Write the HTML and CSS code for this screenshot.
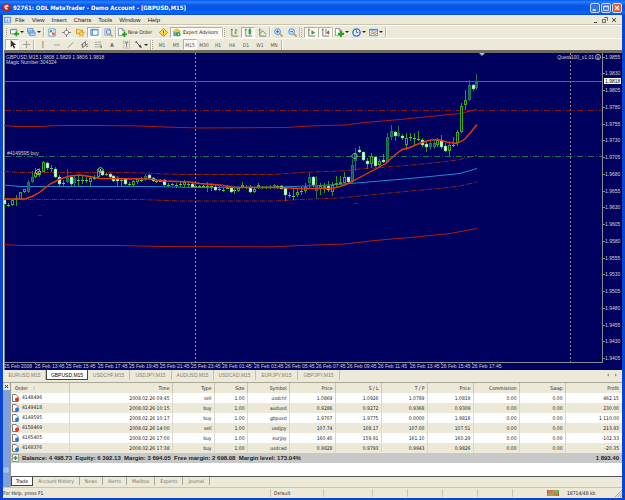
FILE: index.html
```
<!DOCTYPE html>
<html lang="en">
<head>
<meta charset="utf-8">
<title>92761: ODL MetaTrader - Demo Account - [GBPUSD,M15]</title>
<link rel="stylesheet" href="styles.css">
</head>
<body>
<svg class="defs" aria-hidden="true">
  <symbol id="plus" viewBox="0 0 6 6"><path d="M2 0h2v2h2v2H4v2H2V4H0V2h2z" fill="#18a818"/></symbol>
  <symbol id="sheet" viewBox="0 0 9 9"><path d="M.5.5h4l3 2.500v5.500h-7z" fill="#fff" stroke="#8a8f98"/><path d="M4.500.5v2.500h3" fill="none" stroke="#8a8f98"/></symbol>
</svg>
<div class="window">
  <header class="title">
    <svg class="logo" viewBox="0 0 9 9"><circle cx="4.500" cy="4.500" r="4.200" fill="#b82418"/><path d="M2 3l3-1.500 2 1.500-1 1-2 .5 2 1-1 1.500-2-1" fill="#fff" opacity=".8"/></svg>
    <h1>92761: ODL MetaTrader - Demo Account - [GBPUSD,M15]</h1>
    <button class="win" aria-label="Minimize"><svg viewBox="0 0 10 10"><path d="M2 7.500h4" stroke="#fff" stroke-width="2"/></svg></button>
    <button class="win" aria-label="Restore"><svg viewBox="0 0 10 10"><path d="M2 2.500h6v5.500H2zM2 3.500h6" fill="none" stroke="#fff"/></svg></button>
    <button class="win close" aria-label="Close"><svg viewBox="0 0 10 10"><path d="M2.500 2.500l5 5m0-5l-5 5" stroke="#fff" stroke-width="1.500"/></svg></button>
  </header>

  <nav class="menu">
    <svg class="menu-icon" viewBox="0 0 9 9"><path d="M.5 1.500h7v6h-7z" fill="#fff" stroke="#4a8be0"/><path d="M0 2h8M2 4v3M4 3.500v3M6 4v2" stroke="#4a8be0"/></svg>
    <button>File</button><button>View</button><button>Insert</button><button>Charts</button><button>Tools</button><button>Window</button><button>Help</button>
    <span class="grow"></span>
    <button class="mdi" aria-label="Minimize chart"><svg viewBox="0 0 8 8"><path d="M2 6.500h3" stroke="#444"/></svg></button>
    <button class="mdi" aria-label="Restore chart"><svg viewBox="0 0 8 8"><path d="M3.500 2V1.500h3v3H6M1.500 3.500h3v3h-3z" fill="none" stroke="#666"/></svg></button>
    <button class="mdi" aria-label="Close chart"><svg viewBox="0 0 8 8"><path d="M2 2l4 4m0-4L2 6" stroke="#444"/></svg></button>
  </nav>

  <div class="toolbar">
    <i class="grip"></i>
    <button class="drop" aria-label="New chart"><svg viewBox="0 0 10 10"><path d="M.5 1.500h7v5h-7z" fill="#fff" stroke="#6c8a78"/><path d="M1 2h6" stroke="#5b9be0"/><use href="#plus" x="4" y="3.500" width="6" height="6"/></svg></button>
    <button class="drop" aria-label="Profiles"><svg viewBox="0 0 10 10"><path d="M.5.5h6v4h-6zM1.500 2.500h6v4h-6zM3 4.500h6v4H3z" fill="#e4f0fc" stroke="#5c94d8"/></svg></button>
    <i class="sep"></i>
    <button aria-label="Market Watch"><svg viewBox="0 0 10 10"><path d="M1 1h7v8H1z" fill="#fff" stroke="#5b9be0"/><path d="M2 2.500h2.500V5H2z" fill="#30a848"/><path d="M4.500 5h3v3h-3z" fill="#e06048"/><path d="M5 2h2v2H5z" fill="#9cc8f0"/></svg></button>
    <button aria-label="Data Window"><svg viewBox="0 0 10 10"><circle cx="5" cy="5" r="2.500" fill="#fff" stroke="#88888c"/><path d="M5 0v3M5 7v3M0 5h3M7 5h3" stroke="#777"/></svg></button>
    <button aria-label="Navigator"><svg viewBox="0 0 10 10"><path d="M.5 1.500h3l1 1h3v4h-7z" fill="#f8dc70" stroke="#c89830"/><path d="M6 3l1 2 2.500.3-2 1.600.5 2.600-2-1.400-2 1.400.5-2.600-2-1.600L5 5z" fill="#ffd840" stroke="#b88820" stroke-width=".5"/></svg></button>
    <button class="on" aria-label="Terminal"><svg viewBox="0 0 10 10"><path d="M1 1.500h8v6.500H1z" fill="#fff" stroke="#3a78cc"/><path d="M1 2h8M2.500 2v6" stroke="#5c98e0" stroke-width="1.500"/></svg></button>
    <button aria-label="Strategy Tester"><svg viewBox="0 0 10 10"><path d="M1 1h6v7H1z" fill="#e8f0fc" stroke="#86a0c4"/><circle cx="5" cy="4.500" r="2.500" fill="#cce4fc" stroke="#5a80b4"/><path d="M7 6.500l2.500 3" stroke="#c89830" stroke-width="1.500"/></svg></button>
    <i class="sep"></i>
    <button class="text order"><svg viewBox="0 0 10 10"><use href="#sheet" width="9" height="9"/><use href="#plus" x="4" y="4" width="6" height="6"/></svg>New Order</button>
    <button aria-label="MetaEditor"><svg viewBox="0 0 10 10"><path d="M5 .5L9.500 5 5 9.500.5 5z" fill="#ffdc48" stroke="#b88810"/><path d="M5 3v3M5 7v1" stroke="#8a6000"/></svg></button>
    <button class="text on experts"><svg viewBox="0 0 10 10"><path d="M1 4l4-3 4 2-1 3H2z" fill="#f4c838" stroke="#b88810" stroke-width=".5"/><path d="M1.500 5h5v4h-5z" fill="#58a0e0"/><circle cx="7" cy="7" r="2.500" fill="#20a038"/><path d="M6.500 5.500l2 1.500-2 1.500z" fill="#fff"/></svg>Expert Advisors</button>
    <i class="sep"></i><i class="grip"></i>
    <button aria-label="Bar Chart"><svg viewBox="0 0 10 10"><path d="M2 1v8h7M1 2.500L2 1l1 1.500" fill="none" stroke="#777"/><path d="M6.500 1v6M5 5.500h1.500M6.500 2.500H8" stroke="#30a030"/></svg></button>
    <button class="on" aria-label="Candlesticks"><svg viewBox="0 0 10 10"><path d="M2 1v8h7M1 2.500L2 1l1 1.500" fill="none" stroke="#777"/><path d="M6.500 0v8" stroke="#188018"/><path d="M5 1.500h3v5H5z" fill="#28b040"/></svg></button>
    <button aria-label="Line Chart"><svg viewBox="0 0 10 10"><path d="M2 1v8h7M1 2.500L2 1l1 1.500" fill="none" stroke="#777"/><path d="M3 6c1-4 3-3 6 1" fill="none" stroke="#40a040"/></svg></button>
    <i class="sep"></i>
    <button aria-label="Zoom In"><svg viewBox="0 0 10 10"><circle cx="4" cy="4" r="3.200" fill="#c8e4ff" stroke="#4088dc"/><path d="M2.500 4h3M4 2.500v3" stroke="#2060c0"/><path d="M6.500 6.500l3 3" stroke="#d0a028" stroke-width="2"/></svg></button>
    <button aria-label="Zoom Out"><svg viewBox="0 0 10 10"><circle cx="4" cy="4" r="3.200" fill="#c8e4ff" stroke="#4088dc"/><path d="M2.500 4h3" stroke="#2060c0"/><path d="M6.500 6.500l3 3" stroke="#d0a028" stroke-width="2"/></svg></button>
    <i class="sep"></i><i class="grip"></i>
    <button class="on" aria-label="Auto Scroll"><svg viewBox="0 0 10 10"><path d="M2 1v8h7M1 2.500L2 1l1 1.500" fill="none" stroke="#777"/><path d="M5 2.500l4 2.500-4 2.500z" fill="#28a838"/></svg></button>
    <button class="on" aria-label="Chart Shift"><svg viewBox="0 0 10 10"><path d="M2 1v8h7M1 2.500L2 1l1 1.500M5.500 1v6" fill="none" stroke="#777"/><path d="M9 2.500L6 5l3 2.500z" fill="#3068c8"/><path d="M7.500 4l2 1-2 1z" fill="#d84820"/></svg></button>
    <i class="sep"></i>
    <button class="drop" aria-label="Indicators"><svg viewBox="0 0 10 10"><use href="#sheet" width="9" height="9"/><use href="#plus" x="3" y="3" width="7" height="7"/></svg></button>
    <button class="drop" aria-label="Periods"><svg viewBox="0 0 10 10"><circle cx="5" cy="5" r="4" fill="#e4f2ff" stroke="#2c6cd0" stroke-width="1.500"/><path d="M5 2.500V5h2" fill="none" stroke="#555"/></svg></button>
    <button class="drop" aria-label="Templates"><svg viewBox="0 0 10 10"><path d="M.5 1.500h9v7h-9z" fill="#f4f8ff" stroke="#5c94d8"/><path d="M0 2h10" stroke="#4c84cc" stroke-width="1.500"/><path d="M1.500 5l2-1 2 1 3-1" fill="none" stroke="#c87040"/><path d="M1.500 7l3-1 2 1 2-1" fill="none" stroke="#40a050"/></svg></button>
    <i class="sep"></i>
  </div>

  <div class="toolbar drawing">
    <button class="on" aria-label="Cursor"><svg viewBox="0 0 10 10"><path d="M3 0v8l2-2 1.500 3.500L8 9 6.500 5.500H9z" fill="#333"/></svg></button>
    <button aria-label="Crosshair"><svg viewBox="0 0 10 10"><path d="M5 1v8M1 5h8" stroke="#999"/></svg></button>
    <i class="sep"></i>
    <button aria-label="Vertical Line"><svg viewBox="0 0 10 10"><path d="M5.500 1v8" stroke="#a07850"/></svg></button>
    <button aria-label="Horizontal Line"><svg viewBox="0 0 10 10"><path d="M2 5.500h7" stroke="#999"/></svg></button>
    <button aria-label="Trendline"><svg viewBox="0 0 10 10"><path d="M2 8.500l6-6" stroke="#888"/></svg></button>
    <button aria-label="Channel"><svg viewBox="0 0 10 10"><path d="M1 6l6-5M2 9l7-5M3 4v4M6 2v4M7 7h2" stroke="#666"/></svg></button>
    <button aria-label="Fibonacci"><svg viewBox="0 0 10 10"><path d="M1 2.500h7M1 5h7M1 7.500h7" stroke="#888" stroke-dasharray="1 .5"/><path d="M8 6v3" stroke="#555"/></svg></button>
    <button class="glyph">A</button>
    <button aria-label="Text Label"><svg viewBox="0 0 10 10"><path d="M1.500 1.500h7v7.500h-7z" fill="none" stroke="#999" stroke-dasharray="1 1"/><path d="M3 3h4M5 3v5" stroke="#777"/></svg></button>
    <button class="drop" aria-label="Arrows"><svg viewBox="0 0 10 10"><path d="M1 3l2-2 1 2zM5 6l2-1 2 4-3-1z" fill="#444"/><path d="M2 2l5 5" stroke="#555"/></svg></button>
    <i class="sep"></i><i class="grip"></i>
    <button>M1</button><button>M5</button><button class="on">M15</button><button>M30</button><button>H1</button><button>H4</button><button>D1</button><button>W1</button><button>MN</button>
    <i class="sep"></i>
  </div>

  <main>
    <svg class="chart" id="chart" viewBox="3 50 619 320" role="img" aria-label="GBPUSD M15 candlestick chart">
      <rect x="3" y="50" width="619" height="3" fill="#6c6a62"/>
      <rect x="3" y="50" width="1" height="320" fill="#ece9d8"/>
      <rect x="4" y="53" width="618" height="317" fill="#00005e"/>
      <path d="M4.500 52v318" stroke="#85858a"/>
      <g fill="none">
        <path class="grid" d="M195.500 53V362M570.500 53V362"/>
        <path class="stop" d="M5 110.500H602"/>
        <path class="entry" d="M5 156.500H602"/>
        <path d="M5 81.500H602" stroke="#606078"/>
        <path d="M602.500 53V362.500M5 362.500H603" stroke="#8c8c98"/>
        <path class="band" d="M4 125.500L15 126.500 40 126.500 60 125.500 100 125.500 140 126 165 127 200 128 285 127.500 310 126 345 125 365 122.500 400 119.500 430 116.500 460 113.500 477 109.500"/>
        <path class="band" d="M4 244.500L20 245.500 120 245.500 160 246.500 275 246.800 300 245.500 345 244 375 240.500 410 237.500 450 233.500 477 228.500"/>
        <path class="inner" d="M4 171.500L20 172.500 130 172.500 180 174.500 275 174.500 300 172.500 340 171 360 169 400 166 433 163 457 160 477 155.500"/>
        <path class="inner" d="M4 199.500H140L180 201 275 201 300 199.500 340 198 370 195 410 191 440 188.500 460 186 477 182"/>
        <path class="slow" d="M4 185L20 186.500 150 186.500 200 187.500 280 187 320 185.500 350 183.500 380 181 410 178.500 440 175.500 460 173.500 477 168.500"/>
      </g>
      <path d="M38 215.500h4M354 203.500h4" stroke="#8a1010"/>
      <g id="candles"></g>
      <path class="fast" d="M4 199L25 199 33 196 40 192 50 184 60 179 70 176 80 175 90 176.500 100 178.500 150 179 165 181 190 182 200 183.500 220 185 235 187.500 280 187.500 300 188.500 333 188.500 345 185 355 180 370 172 385 164 395 155 402 149.500 410 147.500 418 144 428 140.500 437 139.500 447 142 457 143.500 465 139 471 132 477 124.500"/>
      <g fill="none" stroke="#8cc88c"><path d="M38 169l3 3-3 3-3-3zM38 171v3M100.500 167l3 3-3 3-3-3zM100.500 169v3M354.500 153l3 3-3 3-3-3z"/></g>
      <path d="M479 53h6l-3 3z" fill="#b8b8b8"/>
      <rect x="604" y="78" width="17" height="6" fill="#fff"/>
      <text x="605" y="83" class="bid">1.9818</text>
      <g class="label">
        <text x="6" y="59">GBPUSD,M15</text><text x="39" y="59">1.9808 1.9829 1.9806 1.9818</text>
        <text x="6" y="64">Magic Number:304324</text>
        <text x="7" y="155">#4149595 buy</text>
        <text x="594" y="59" text-anchor="end">Quest100_v1.01</text>
      </g>
      <g fill="none" stroke="#c8c8b8" stroke-width=".8"><circle cx="598" cy="57" r="2.600"/><path d="M596.800 57.800q1.200 1 2.400 0M597 56.200h.6M598.500 56.200h.6"/></g>
      <g class="label" id="axes"></g>
    </svg>
  </main>

  <div class="charts">
    <button>EURUSD,M15</button><button class="current">GBPUSD,M15</button><button>USDCHF,M15</button><button>USDJPY,M15</button><button>AUDUSD,M15</button><button>USDCAD,M15</button><button>EURJPY,M15</button><button>GBPJPY,M15</button>
    <span class="grow"></span>
    <button class="scroll" aria-label="Scroll left"><svg viewBox="0 0 4 4"><path d="M3 .5v3L1 2z" fill="#888"/></svg></button>
    <button class="scroll" aria-label="Scroll right"><svg viewBox="0 0 4 4"><path d="M1 .5v3L3 2z" fill="#888"/></svg></button>
  </div>

  <section class="terminal">
    <div class="side"><button aria-label="Close terminal"><svg viewBox="0 0 5 5"><path d="M1 1l3 3m0-3L1 4" stroke="#333"/></svg></button>
      <svg class="side-icon" viewBox="0 0 6 6"><path d="M1 1h4v4H1zM1 3h4" fill="none" stroke="#d8e8fc" stroke-width=".7"/></svg></div>
    <div class="panel">
      <table>
        <colgroup><col class="c-order"><col class="c-time"><col class="c-type"><col class="c-size"><col class="c-symbol"><col class="c-num"><col class="c-num"><col class="c-num"><col class="c-num"><col class="c-num"><col class="c-num"><col></colgroup>
        <thead><tr><th>Order <span class="sort">/</span></th><th>Time</th><th>Type</th><th>Size</th><th>Symbol</th><th>Price</th><th>S / L</th><th>T / P</th><th>Price</th><th>Commission</th><th>Swap</th><th>Profit</th></tr></thead>
        <tbody id="orders"></tbody>
        <tfoot><tr><td colspan="11"><svg class="row-icon" viewBox="0 0 7 8"><path d="M.5.5h6v7h-6z" fill="#f4f8f0" stroke="#9a9a9a"/><path d="M3.500 2v4M1.500 4h4" stroke="#28a028" stroke-width="1.500"/></svg>Balance: 4 498.73&nbsp; Equity: 6 392.13&nbsp; Margin: 3 694.05&nbsp; Free margin: 2 698.08&nbsp; Margin level: 173.04%</td><td>1 893.40</td></tr></tfoot>
      </table>
      <div class="tabs"><button class="current">Trade</button><button>Account History</button><button>News</button><button>Alerts</button><button>Mailbox</button><button>Experts</button><button>Journal</button></div>
    </div>
  </section>

  <footer class="status">
    <span class="help">For Help, press F1</span><span class="profile">Default</span><span class="cell wide"></span><span class="cell"></span><span class="cell"></span><span class="cell"></span><span class="cell"></span><span class="cell last"></span>
    <span class="link"><svg viewBox="0 0 12 6"><path d="M0 0h12v6H0z" fill="#58a838"/><path d="M0 0h6v3H0zM7 3h5v3H7z" fill="#d84830"/><path d="M2 0v6M4 0v6M6 0v6M8 0v6M10 0v6" stroke="#f0d8b0" stroke-width=".5"/></svg>18714/48 kb</span>
    <svg class="resize" viewBox="0 0 8 8"><path d="M1 8l7-7M3.500 8L8 3.500M6 8l2-2" stroke="#aaa798"/></svg>
  </footer>
</div>
<script src="app.js"></script>
</body>
</html>
```
FILE: styles.css
```
* { box-sizing: border-box; }
body {
  margin: 0;
  background: #0a44d0;
  font: 5px/6px "DejaVu Sans Condensed", "DejaVu Sans", sans-serif;
  color: #1c1c1c;
}
button {
  font: inherit;
  color: inherit;
  border: 0;
  padding: 0;
  margin: 0;
  background: none;
  white-space: nowrap;
}
svg { display: block; }
.defs { width: 0; height: 0; position: absolute; }
.grow { flex: 1; }
.window { min-height: 100vh; padding: 0 3px 2px; display: flex; flex-direction: column; }

.title {
  display: flex;
  align-items: center;
  height: 15px;
  margin: 0 -3px;
  padding: 0 3px 0 2px;
  gap: 1px;
  background: linear-gradient(#0a5cf0, #2a80ff 2px, #0c58e8 5px, #0654e4 9px, #0868ff 13px, #0848c8);
}
.logo { width: 9px; height: 9px; }
.title h1 {
  flex: 1;
  margin: 0 0 0 1px;
  font: bold 6px/8px "DejaVu Sans Condensed", sans-serif;
  color: #fff;
}
.win { width: 10px; height: 10px; border: 1px solid #c8dcff; border-radius: 2px; background: #3870e8; }
.win svg { width: 8px; height: 8px; }
.close { background: #e45a30; }

.menu {
  display: flex;
  align-items: center;
  height: 10px;
  padding: 0 3px 0 1px;
  font: 6px/8px "Liberation Sans", sans-serif;
  background: #ece9d8;
  border-bottom: 1px solid #c8c5b4;
}
.menu-icon { width: 8px; height: 8px; }
.menu button { padding: 0 4px 0 3px; }
.menu button.mdi { width: 9px; padding: 0; }
.mdi svg { width: 8px; height: 8px; }

.toolbar { display: flex; align-items: center; height: 13px; padding-left: 3px; background: #ece9d8; border-top: 1px solid #fcfbf4; }
.toolbar button { flex: none; width: 14px; height: 11px; display: flex; align-items: center; justify-content: center; border: 1px solid transparent; }
.toolbar button svg { flex: none; width: 9px; height: 9px; }
.toolbar button.on { background: #f8f7f0; border-color: #b4b1a0 #fff #fff #b4b1a0; }
.toolbar .drop { width: 17px; justify-content: flex-start; gap: 1px; }
.toolbar .drop::after { content: ""; border: 2px solid transparent; border-top-color: #222; border-bottom: 0; }
.toolbar .text { justify-content: flex-start; gap: 1px; }
.toolbar .order { width: 39px; }
.toolbar .experts { width: 52px; padding-left: 1px; gap: 2px; }
.grip { flex: none; width: 3px; height: 9px; border-left: 1px dotted #a09d8c; }
.sep { flex: none; width: 2px; height: 10px; border-left: 1px solid #bab7a6; border-right: 1px solid #fff; }
.drawing { height: 12px; padding-left: 2px; color: #555; }
.drawing .glyph { font-weight: bold; color: #555; }

.chart { width: 100%; height: auto; }
.chart path { stroke-width: 1; }
.grid { stroke: #8a8c90; stroke-dasharray: 2 2; }
.stop { stroke: #8c1418; stroke-dasharray: 6 2 1 2; }
.entry { stroke: #1c7458; stroke-dasharray: 6 2 1 2; }
.band { stroke: #ac1c14; }
.inner { stroke: #84241c; stroke-dasharray: 5 1 1 1; }
.slow { stroke: #2488d0; }
.chart .fast { stroke: #e83c08; stroke-width: 1.400; fill: none; }
.label { font: 5px "Liberation Sans", sans-serif; fill: #d4d4cc; }
.bid { font: 5px "Liberation Sans", sans-serif; fill: #000; }

.charts { display: flex; height: 13px; padding: 0 2px 1px 1px; background: #ece9d8; color: #85836f; font: 5px/10px "Liberation Sans", sans-serif; border-bottom: 1px solid #aaa798; }
.charts button { width: 42px; height: 10px; border-right: 1px solid #c4c1b0; }
.charts .current { background: #fff; color: #000; border: 1px solid #444; border-top: 0; }
.charts .scroll { width: 8px; display: grid; place-items: center; border: 0; }
.scroll svg { width: 4px; height: 4px; }

.terminal { display: flex; flex: 1; background: #ece9d8; }
.side { width: 7px; display: flex; flex-direction: column; justify-content: space-between; background: linear-gradient(#ece9d8 7px, #7ca0e0 7px); }
.side button svg { width: 5px; height: 5px; margin: 1px; }
.side-icon { width: 6px; height: 6px; margin-bottom: 14px; }
.panel { flex: 1; display: flex; flex-direction: column; background: #fff; border-left: 1px solid #999; }
table { width: 100%; table-layout: fixed; border-collapse: collapse; }
.c-order { width: 58px; }
.c-time { width: 103px; }
.c-type { width: 42px; }
.c-size { width: 33px; }
.c-symbol { width: 42px; }
.c-num { width: 46px; }
th, td { height: 10px; padding: 0 2px; text-align: right; font-weight: normal; white-space: nowrap; border-right: 1px solid #dcd9cc; }
th { background: #ece9d8; border-color: #c8c5b4; }
th:first-child, td:first-child { text-align: left; }
th:first-child { padding-left: 4px; }
th:last-child, td:last-child { border-right: 0; padding-right: 3px; }
.sort { margin-left: 4px; color: #999; }
tbody tr:nth-child(even) { background: #ece9d8; }
td:first-child { padding-left: 1px; }
.row-icon { display: inline-block; width: 7px; height: 8px; margin-right: 3px; vertical-align: middle; }
tfoot td { background: #c8c8c8; border: 0; font: bold 6px/8px "Liberation Sans", sans-serif; }

.tabs { display: flex; height: 11px; margin-top: auto; background: #ece9d8; border-top: 1px solid #555; color: #77756a; }
.tabs button { height: 8px; padding: 0 5px; border-right: 1px solid #aaa798; }
.tabs .current { height: 9px; padding: 0 4px; background: #fff; color: #000; border: 1px solid #444; border-top: 0; }

.status { display: flex; align-items: center; height: 11px; background: #ece9d8; border-top: 1px solid #c8c5b4; }
.status > span { height: 8px; line-height: 8px; border-right: 1px solid #c8c5b4; }
.status .help { width: 268px; }
.status .profile { width: 53px; padding-left: 3px; }
.status .cell { width: 35px; }
.status .wide { width: 49px; }
.status .last { flex: 1; max-width: 34px; border: 0; }
.status .link { flex: 1; display: flex; align-items: center; gap: 8px; border: 0; }
.link svg { width: 12px; height: 6px; }
.resize { width: 8px; height: 8px; }
```
FILE: app.js
```
const NS = "http://www.w3.org/2000/svg";
const add = (parent, tag, attrs, text) => {
  const el = document.createElementNS(NS, tag);
  for (const key in attrs) el.setAttribute(key, attrs[key]);
  if (text) el.textContent = text;
  parent.append(el);
};

// kind (u rising, d falling, t strong rising, n doji), high, low, body top, body bottom
const candles = `d 285 320 300 313;n 308 320 316;u 297 318 299 314;u 285 318 295 300;u 275 297 277 297;u 266 280 268 277;t 240 280 247 275;t 212 250 230 247;u 205 235 218 232;u 205 230 214 224;u 184 217 187 215;d 186 210 188 204;n 196 215 203;d 202 235 207 230;d 225 260 230 252;n 240 262 248;t 208 250 235 246;d 228 258 231 252;t 228 258 235 250;n 228 258 241;n 228 252 240;n 232 250 239;u 230 258 235 246;n 225 240 233;u 205 235 212 232;d 210 228 214 224;n 218 228 223;d 220 235 223 231;d 226 246 229 242;d 228 258 234 244;n 236 258 241;d 234 256 237 253;n 246 262 252;u 240 258 242 256;u 236 252 238 246;n 232 246 239;t 222 244 228 238;d 222 238 226 234;d 230 246 233 243;n 238 250 243;n 236 246 242;d 236 258 240 255;n 250 262 254;n 248 258 253;n 248 264 254;n 246 262 251;u 240 260 246 256;n 246 260 252;d 248 262 251 260;n 252 262 257;n 254 260 257;n 254 260 257;n 245 276 257;n 250 272 257;d 256 272 262 270;n 258 272 266;n 262 276 269;n 255 268 263;d 262 280 264 277;n 262 282 270;u 262 276 264 273;u 246 265 255 262;n 254 266 261;d 256 280 262 277;u 260 280 266 276;u 250 266 256 262;n 258 266 262;n 258 266 262;n 256 266 260;t 252 266 256 262;n 254 266 259;d 255 268 259 266;d 262 302 264 286;n 275 295 285;n 265 300 287;u 268 290 276 284;n 260 285 273;u 250 280 262 272;t 220 268 230 248;d 228 262 230 256;t 228 298 258 274;u 250 285 258 266;u 250 280 258 262;d 244 275 257 270;u 245 288 256 276;u 228 262 250 256;u 228 255 245 252;u 215 250 232 250;d 230 252 232 246;t 178 250 195 246;t 145 212 160 182;d 138 158 151 157;d 155 182 157 180;d 175 208 183 191;u 158 205 168 192;d 168 200 171 198;u 176 200 182 196;d 163 190 180 186;t 100 190 110 185;t 75 120 93 110;d 93 122 96 107;t 78 110 98 108;d 103 120 108 115;u 100 150 115 135;n 98 122 112;n 100 135 113;n 94 122 117;d 114 140 120 135;d 122 155 132 141;t 120 150 130 142;t 118 146 128 140;u 114 142 120 134;d 106 146 120 142;d 128 156 138 153;u 130 168 134 154;n 112 142 134;u 90 138 95 130;u 8 98 18 96;u -30 30 0 16;t -60 2 -44 0;d -48 -28 -45 -33;t -78 -30 -55 -35`;

const group = document.getElementById("candles");
candles.split(";").forEach((row, i) => {
  const [kind, ...v] = row.split(" ");
  const [high, low, top, bottom] = v.map(n => Math.round(100 + n / 3));
  const x = Math.round(4.2 + i * 3.903);
  const wick = kind === "t" ? "#1c7850" : "#2c9c1c";
  add(group, "path", { d: `M${x + 0.5} ${high}V${low}`, stroke: wick });
  if (kind === "n") {
    add(group, "path", { d: `M${x - 1} ${top + 0.5}h3`, stroke: "#5cc840" });
  } else if (kind === "d") {
    add(group, "rect", { x: x - 1, y: top, width: 3, height: Math.max(2, bottom - top), fill: "#c8ffd8", stroke: "#38b040", "stroke-width": 0.4 });
  } else {
    add(group, "rect", { x: x - 0.5, y: top + 0.5, width: 2, height: Math.max(1, bottom - top - 1), fill: kind === "t" ? "#145c58" : "#00005e", stroke: kind === "t" ? "#1c7c58" : "#3cac18" });
  }
});

const axes = document.getElementById("axes");
for (let i = 0; i < 19; i++) {
  const y = 56.5 + i * 16.75;
  add(axes, "path", { d: `M603 ${Math.round(y) + 0.5}h2`, stroke: "#8c8c98" });
  if (i !== 1 || y < 78) add(axes, "text", { x: 605, y: Math.round(y + 2) }, ((19855 - i * 25) / 10000).toFixed(4));
}
for (let i = 0; i < 16; i++) {
  const hour = 11 + i * 2;
  const label = i === 0 ? "25 Feb 2008" : `${hour < 24 ? 25 : 26} Feb ${String(hour % 24).padStart(2, "0")}:45`;
  const x = 4 + Math.round(i * 31.2);
  add(axes, "path", { d: `M${x + 0.5} 362v2`, stroke: "#8c8c98" });
  add(axes, "text", { x, y: 368 }, label);
}

const orders = [
  ["4148496", "2008.02.26 09:45", "sell", "1.00", "usdchf", "1.0869", "1.0926", "1.0789", "1.0819", "0.00", "0.00", "462.15"],
  ["4149418", "2008.02.26 10:15", "buy", "1.00", "audusd", "0.9286", "0.9272", "0.9368", "0.9309", "0.00", "0.00", "230.00"],
  ["4149595", "2008.02.26 10:17", "buy", "1.00", "gbpusd", "1.9707", "1.9775", "0.0000", "1.9818", "0.00", "0.00", "1 110.00"],
  ["4158469", "2008.02.26 14:00", "sell", "1.00", "usdjpy", "107.74", "108.17", "107.00", "107.51", "0.00", "0.00", "213.93"],
  ["4165405", "2008.02.26 17:00", "buy", "1.00", "eurjpy", "160.40", "159.91", "161.10", "160.29", "0.00", "0.00", "-102.33"],
  ["4168376", "2008.02.26 17:38", "buy", "1.00", "usdcad", "0.9828", "0.9793", "0.9943", "0.9826", "0.00", "0.00", "-20.35"]
];
document.getElementById("orders").innerHTML = orders.map(cells => {
  const color = cells[2] === "sell" ? "#d83c1c" : "#2878d0";
  const icon = `<svg class="row-icon" viewBox="0 0 7 8"><path d="M.5.5h3.500l2 2v5h-5.500z" fill="#fff" stroke="#777"/><circle cx="5" cy="5.500" r="2" fill="${color}"/></svg>`;
  return `<tr>${cells.map((c, i) => `<td>${i ? "" : icon}${c}</td>`).join("")}</tr>`;
}).join("");
```
